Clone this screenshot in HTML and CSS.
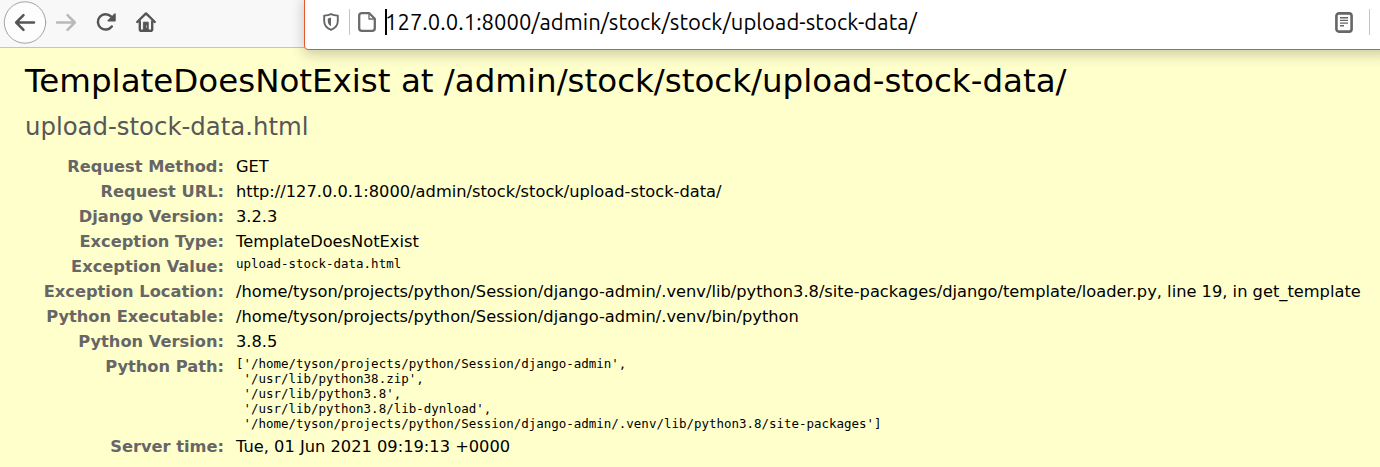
FILE: index.html
```html
<!DOCTYPE html>
<html lang="en">
<head>
<meta charset="utf-8">
<title>TemplateDoesNotExist at /admin/stock/stock/upload-stock-data/</title>
<link rel="stylesheet" href="styles.css">
</head>
<body>
<nav class="toolbar">
  <svg class="nav-icons" width="180" height="47" viewBox="0 0 180 47" fill="none" stroke-linecap="round" stroke-linejoin="round">
    <circle cx="25" cy="22.5" r="20.7" fill="#fdfdfd" stroke="#a3a3a3" stroke-width="1"/>
    <path d="M34 22.5H17M23.5 15.2L16.2 22.5L23.5 29.8" stroke="#555" stroke-width="2.5"/>
    <path d="M57 22.5H74M67.5 15.2L74.8 22.5L67.5 29.8" stroke="#b9b9b9" stroke-width="2.5"/>
    <path d="M111.8 26.5A7.7 7.7 0 1 1 111 16.4" stroke="#555" stroke-width="2.5"/>
    <path d="M115 14V20.8H108.2Z" fill="#555" stroke="#555" stroke-width="1.5"/>
    <path d="M137.2 22L146 13.4L154.8 22M139.8 21.5V29.2Q139.8 30.8 141.4 30.8H150.6Q152.2 30.8 152.2 29.2V21.5" stroke="#555" stroke-width="2.4"/>
    <path d="M143.8 22.2H148.2V30.5H143.8Z" fill="#555" stroke="#555" stroke-width="1"/>
    <path d="M146.6 25.5V27.5" stroke="#aaa" stroke-width="1"/>
  </svg>
  <div class="address">
    <svg class="shield" width="16" height="18" viewBox="0 0 16 18" fill="none">
      <path d="M8 1.1C10.4 2.3 12.5 2.5 14.8 2.6V8C14.8 12.4 12 15.2 8 16.8C4 15.2 1.2 12.4 1.2 8V2.6C3.5 2.5 5.6 2.3 8 1.1Z" stroke="#666" stroke-width="1.9" stroke-linejoin="round"/>
      <path d="M8 4.6V13.2C5.8 12 4.8 10.4 4.8 8V5.4C6 5.2 7 4.9 8 4.6Z" fill="#666"/>
    </svg>
    <span class="separator"></span>
    <svg class="page-icon" width="18" height="20" viewBox="0 0 18 20" fill="none" stroke="#6b6b6b" stroke-linejoin="round">
      <path d="M4 1.2H11.3L16.8 6.7V16.2Q16.8 18.8 14.2 18.8H3.8Q1.2 18.8 1.2 16.2V3.8Q1.2 1.2 4 1.2Z" stroke-width="2.3"/>
      <path d="M11 2V7H16" stroke-width="1.3"/>
    </svg>
    <span class="caret"></span>
    <span class="url">127.0.0.1:8000/admin/stock/stock/upload-stock-data/</span>
    <svg class="reader" width="18" height="21" viewBox="0 0 18 21" fill="none" stroke="#666">
      <rect x="1.4" y="1.4" width="15.2" height="18.2" rx="2.6" stroke-width="2.6"/>
      <path d="M5 5.7H13M5 8.4H13M5 11.1H13M5 13.8H9" stroke-width="1.4"/>
    </svg>
    <span class="separator"></span>
  </div>
</nav>
<main class="summary">
  <h1>TemplateDoesNotExist at /admin/stock/stock/upload-stock-data/</h1>
  <p class="message">upload-stock-data.html</p>
  <table class="meta">
    <tr><th>Request Method:</th><td>GET</td></tr>
    <tr><th>Request URL:</th><td>http://127.0.0.1:8000/admin/stock/stock/upload-stock-data/</td></tr>
    <tr><th>Django Version:</th><td>3.2.3</td></tr>
    <tr><th>Exception Type:</th><td>TemplateDoesNotExist</td></tr>
    <tr><th>Exception Value:</th><td><pre>upload-stock-data.html</pre></td></tr>
    <tr><th>Exception Location:</th><td>/home/tyson/projects/python/Session/django-admin/.venv/lib/python3.8/site-packages/django/template/loader.py, line 19, in get_template</td></tr>
    <tr><th>Python Executable:</th><td>/home/tyson/projects/python/Session/django-admin/.venv/bin/python</td></tr>
    <tr><th>Python Version:</th><td>3.8.5</td></tr>
    <tr><th>Python Path:</th><td><pre>['/home/tyson/projects/python/Session/django-admin',
 '/usr/lib/python38.zip',
 '/usr/lib/python3.8',
 '/usr/lib/python3.8/lib-dynload',
 '/home/tyson/projects/python/Session/django-admin/.venv/lib/python3.8/site-packages']</pre></td></tr>
    <tr><th>Server time:</th><td>Tue, 01 Jun 2021 09:19:13 +0000</td></tr>
  </table>
</main>
</body>
</html>
```
FILE: styles.css
```css
* { box-sizing: border-box; }
body {
  margin: 0;
  height: 467px;
  overflow: hidden;
  background: #ffffcc;
  color: #000;
  font-family: "DejaVu Sans", sans-serif;
  font-size: 16px;
}
.toolbar {
  position: relative;
  height: 48px;
  background: #f8f8f8;
  border-bottom: 1px solid #c4c4c4;
}
.nav-icons { display: block; }
/* The focused address field overlaps the page below the toolbar. */
.address {
  position: absolute;
  top: -6px;
  left: 304px;
  width: 1090px;
  height: 56px;
  padding: 0 0 0 18px;
  display: flex;
  align-items: center;
  background: #fff;
  border: 1px solid #e4572a;
  border-radius: 4px;
  box-shadow: 0 4px 14px rgba(0, 0, 0, .22);
}
.shield { margin-right: 10px; }
.separator { width: 1px; height: 26px; background: #c4c4c4; }
.page-icon { margin-left: 8px; }
.caret { width: 2px; height: 26px; margin-left: 9px; background: #000; }
.url {
  width: 532px;
  margin-left: -2px;
  padding-bottom: 1px;
  font-family: Ubuntu, "Noto Sans", sans-serif;
  font-size: 22px;
  line-height: 30px;
  white-space: nowrap;
  letter-spacing: .05px;
}
.reader { margin-left: 418px; margin-right: 16px; }
.summary { padding: 12px 0 0 25px; }
h1 {
  margin: 0;
  font-size: 32.5px;
  font-weight: 400;
  line-height: 42px;
  white-space: nowrap;
}
.message {
  margin: 9px 0 11px;
  font-size: 24.38px;
  line-height: 32px;
  color: #575757;
}
.meta { border-collapse: collapse; white-space: nowrap; }
.meta th, .meta td {
  padding: 3px;
  font-size: 16.25px;
  line-height: 19px;
  vertical-align: top;
}
.meta th {
  width: 208px;
  padding-right: 9px;
  text-align: right;
  color: #666;
}
.meta pre {
  margin: -1px 0 0;
  font: 12.48px/15px "DejaVu Sans Mono", monospace;
}
```
